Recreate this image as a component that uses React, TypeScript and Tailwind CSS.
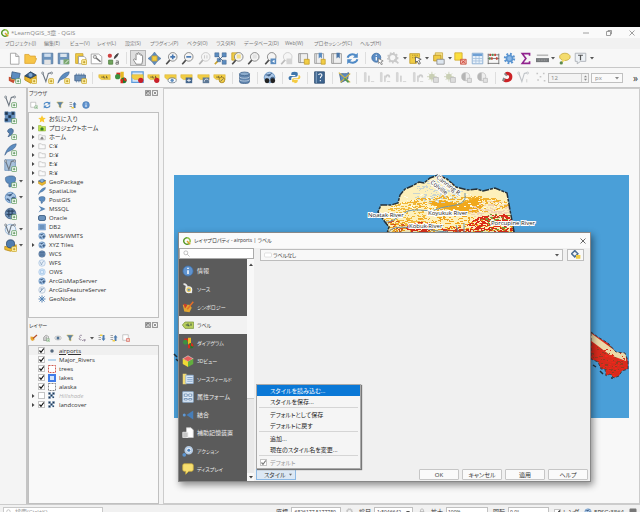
import type { ReactNode } from 'react';
import { clsx } from 'clsx';

const B = '#5b8cc0';
const D = '#3f5f86';
const Y = '#f1cd45';

const plus = (
  <g>
    <rect x="9.5" y="9.5" width="6" height="6" rx="1" fill="#fff" stroke="#5c9a5c" />
    <path d="M12.5 11v3M11 12.5h3" stroke="#4a8a4a" />
  </g>
);
const yellowPlus = (
  <g>
    <rect x="9.5" y="9.5" width="6" height="6" rx="1" fill="#fff3b0" stroke="#cda726" />
    <path d="M12.5 11v3M11 12.5h3" stroke="#b58d10" />
  </g>
);
const lens = (
  <g fill="none">
    <path d="M6 10 1.5 15" stroke="#4d4d4d" strokeWidth="2" />
    <circle cx="9.5" cy="6" r="5.300" fill="#f4f4f4" stroke="#777" />
  </g>
);
const tag = <path d="M1 4.5h11l3 0v6H4L1 8z" fill={Y} stroke="#d5ae2c" strokeWidth=".6" />;
const tagText = <path d="M4 7.5h2M7 6v2.5h2M10.500 6v2.500h1.500" stroke="#5c5330" fill="none" />;
const globe = (
  <g>
    <circle cx="8" cy="8" r="6.500" fill="#a9c6e6" stroke={B} />
    <path d="M3 5c3-1 3 2 5 1s1-4 3-3M3 10c2-1 4 0 4 3M10 8c2-1 4 0 4 1l-3 3c-2-1-2-3-1-4z" fill={D} stroke={D} />
  </g>
);
const vShape = (
  <g fill="none" stroke="#6c7680">
    <path d="M2 2.500 6 13l3-10 4-1" strokeWidth="1.300" />
    <circle cx="2" cy="2.500" r="1.200" fill="#fff" />
    <circle cx="13" cy="2.500" r="1.200" fill="#fff" />
  </g>
);
const feather = <path d="M1 15C3 8 7 2 15 1c0 5-5 8-11 10z" fill={B} stroke={D} strokeWidth=".7" />;
const elephant = <path d="M2 3c2-2 10-3 12 0 1 3-1 7-2 8-2 0-2-1-3-1v4c-1 1-3 1-3 0v-4C3 11 1 6 2 3z" fill={B} stroke={D} strokeWidth=".8" />;
const gearBody = (
  <g>
    <circle cx="8" cy="8" r="5.500" stroke="#5a94d0" strokeWidth="3" strokeDasharray="2.200 2.100" fill="none" />
    <circle cx="8" cy="8" r="3.700" fill="#8bb8e6" stroke="#5a94d0" strokeWidth="2" />
  </g>
);
const bars = (
  <path d="M3 2h2v11H3zM8 6h1v7H8zM11 13h4" fill="#dcdcdc" stroke="#cfcfcf" />
);
const sun = (
  <g>
    <circle cx="6" cy="7" r="3.500" fill="#c9cfb4" />
    <path d="M6 1v12M0 7h12M2 3l8 8M10 3l-8 8" stroke="#c9cfb4" />
    <path d="M8 8h6v6H8z" fill="#dcdcdc" stroke="#bbb" />
  </g>
);
const half = (
  <g>
    <circle cx="7" cy="7" r="5" fill="#eee" stroke="#c4c4c4" />
    <path d="M7 2a5 5 0 0 0 0 10z" fill="#b5b5b5" />
    <path d="M9 9h5v5H9z" fill="#e2e2e2" stroke="#bbb" />
  </g>
);
const folder = <path d="M1.500 3.500h5l1.500 2h6.500v8h-13z" fill="#fafafa" stroke="#a5a5a5" />;
const checker = (
  <path d="M1 1h4v4H1zM9 1h4v4H9zM5 5h4v4H5zM1 9h4v4H1zM9 9h3v3H9z" fill="#22364d" stroke="#5b8cc0" strokeWidth=".6" />
);
const pin = <circle cx="12" cy="11.500" r="3.200" fill="#c8202a" />;

const icons: Record<string, ReactNode> = {
  qgis: (
    <g>
      <path d="M8 1.500a6.500 6.500 0 1 0 4 11.600" fill="none" stroke="#5a9a2b" strokeWidth="3" />
      <path d="M8 1.500a6.500 6.500 0 0 1 5.500 9.500" fill="none" stroke="#8bbf3a" strokeWidth="3" />
      <path d="m8 8 6.500 6.500" stroke="#d9a32a" strokeWidth="3" />
    </g>
  ),
  file: <path d="M3 1.500h6.500l4 4v9.500H3zM9.500 1.500v4h4" fill="#fff" stroke="#999" />,
  open: <path d="M1 3h5l1.500 2H14v3h1.500L13 14H1z" fill="#f7c548" stroke="#dca534" />,
  save: (
    <g>
      <path d="M1.500 1.500h13v13h-13z" fill="#6d94bd" stroke="#54789f" />
      <path d="M4 2h8v4H4z" fill="#cfdeee" />
      <path d="M4 9.500h8V15H4z" fill="#e4e4e4" />
    </g>
  ),
  saveAs: (
    <g>
      <path d="M1.500 1.500h13v13h-13z" fill="#6d94bd" stroke="#54789f" />
      <path d="M4 2h8v4H4zM4 9.500h8V15H4z" fill="#dce5ee" />
      <path d="M8 9h7v6H8z" fill="#7aa76f" />
      <path d="m10 14 4-4" stroke="#fff" />
    </g>
  ),
  layout: (
    <g>
      <path d="M2 2h9v3H5v9H2z" fill={Y} stroke="#caa32d" />
      <path d="M5.500 5.500h7l2 2v7h-9z" fill="#fff" stroke="#999" />
      {yellowPlus}
    </g>
  ),
  layoutManager: (
    <g>
      <path d="M1.500 2.500h9l4 3v9h-13z" fill="#fff" stroke="#999" />
      <path d="m6 6 7 6" stroke="#777" strokeWidth="2" />
      <circle cx="6" cy="6" r="2" fill="#ddd" stroke="#888" />
    </g>
  ),
  style: (
    <g>
      <rect x="1" y="2" width="5" height="5" rx="2" fill="#cf4040" />
      <path d="M9 8c0-3 3-6 5-6-1 2-2 5-5 6z" fill="#444" stroke="#444" />
      <path d="M2 10h5v5H2z" fill="#70a35d" stroke="#4d7f3e" />
      <path d="M11 11h3v4h-3v-2h3" fill="none" stroke="#666" />
    </g>
  ),
  hand: <path d="M5 15c-1-3-4-5-3-6s2 0 3 1V3c0-1.500 2-1.500 2 0V2c0-1.500 2-1.500 2 0v1c0-1 2-1 2 0v1.500c0-1 2-1 2 .5v6l-1 4z" fill="#fff" stroke="#777" />,
  pan: (
    <g>
      <path d="M8 0l3.500 4.500h-7zM8 16l3.500-4.500h-7zM0 8l4.500-3.500v7zM16 8l-4.500-3.500v7z" fill={B} stroke={D} strokeWidth=".5" />
      <path d="M5 5h6v6H5z" fill={Y} stroke="#c9a22d" />
    </g>
  ),
  zoomIn: <g>{lens}<path d="M9.500 3v6M6.500 6h6" stroke="#4576b0" strokeWidth="2" /></g>,
  zoomOut: <g>{lens}<path d="M6.500 6h6" stroke="#4576b0" strokeWidth="2" /></g>,
  zoomNative: <g opacity=".4">{lens}<path d="M8 4v4M11 4v4" stroke="#777" /></g>,
  zoomFull: (
    <g>
      <path d="M5 11 1 15" stroke="#caa32d" strokeWidth="2" />
      <path d="M1 1h5v5H1zM10 1h5v5h-5zM10 10h5v5h-5zM4 8h4v4H4z" fill={B} stroke={D} strokeWidth=".6" />
      <path d="m5 5 6 6M11 5 6 10" stroke={D} />
    </g>
  ),
  zoomSelection: <g><path d="M1 1h8v9H1z" fill={Y} stroke="#c6a02c" />{lens}<path d="M7 3h5v5H7z" fill="#f6e08a" /></g>,
  zoomLayer: <g>{lens}<path d="M7 3h5v5H7z" fill="#e3e3e3" /></g>,
  zoomLast: <g>{lens}<path d="M8 8h7v7H8z" fill={B} /><path d="m13 9.500-3 2 3 2z" fill="#fff" /></g>,
  zoomNext: <g opacity=".35">{lens}<path d="M8 8h7v7H8z" fill="#999" /></g>,
  mapView: <g><path d="M2 2h11v11H2zM4 2v11" fill="#efefef" stroke="#8c8c8c" /><path d="M9 9h6v6H9z" fill={Y} stroke="#c6a02c" /></g>,
  bookmarkNew: <g><path d="M2 2h11v12H2zM4 2v12" fill="#eee" stroke="#999" /><path d="M7 1h4v7L9 6 7 8z" fill={B} /><path d="M10 9h5v6h-5z" fill={Y} stroke="#c6a02c" /></g>,
  bookmark: <g><path d="M2 2h12v12H2zM4 2v12" fill="#eee" stroke="#8c8c8c" /><path d="M8 1h4v7l-2-2-2 2z" fill="#4a76a8" /></g>,
  refresh: (
    <g fill="none" stroke="#4f8ac6" strokeWidth="2.400">
      <path d="M2 7c1-4 7-6 11-2M14 9c-1 4-7 6-11 2" />
      <path d="M14.500 1v6H8.500zM1.500 15V9h6z" fill="#4f8ac6" stroke="none" />
    </g>
  ),
  identify: (
    <g>
      <circle cx="6.500" cy="7" r="5.500" fill="#5a8cc4" stroke="#3f6fa6" />
      <path d="M6.500 6v4.500M6.500 3.500v1.200" stroke="#fff" strokeWidth="1.600" />
      <path d="m9 8 6 3-2.500 1L14 15l-1.500.5-1.500-3L9 14z" fill="#fff" stroke="#666" strokeWidth=".8" />
    </g>
  ),
  gearOff: <g opacity=".35" fill="none" stroke="#777"><circle cx="7" cy="7" r="4.500" strokeWidth="2.500" /><circle cx="7" cy="7" r="6" strokeDasharray="2 2" strokeWidth="2" /><path d="m9 9 5 5" strokeWidth="2" /></g>,
  select: <g><path d="M1 2h12v4l-4 8H1z" fill={Y} stroke="#bf9d30" /><path d="M4 4h7M4 7h5" stroke="#8f7825" strokeDasharray="1 1" /><path d="m8 6 7 3-3 1 2 4-2 1-2-4-2 2z" fill="#fff" stroke="#555" /></g>,
  selectForm: <g><path d="M4 1h9v8H4z" fill="#f8e287" stroke="#c8a840" /><path d="M2 4h9v7H2z" fill={Y} stroke="#b79326" /><path d="M6 9h9v6H6z" fill="#dde6ef" stroke="#888" /></g>,
  deselect: <g><path d="M1 1h9v9H1z" fill="#fbdf3f" stroke="#d2aa2a" /><path d="M8 9h7v6H8z" fill="#f3c0b4" stroke="#c94f40" /><path d="m9 10 5 4M14 10l-5 4" stroke="#c93a30" /></g>,
  table: <g><path d="M1.500 1.500h13v13h-13z" fill="#eaf2fa" stroke="#7fa5cd" /><path d="M2 2h12v3H2z" fill="#6fa0d4" /><path d="M2 8h12M2 11h12M6 5v9M10 5v9" stroke="#a4c0de" /></g>,
  calc: <g><path d="M1.500 2v13M14.500 2v13M1 3.500h14M1 8h14M1 14h14" stroke="#666" /><path d="M4 2v3M10 2v3M6 6.500v3M12 6.500v3" stroke="#c94436" strokeWidth="2" /><path d="M7 2v3M3.500 6.500v3" stroke="#599051" strokeWidth="2" /></g>,
  gear: gearBody,
  sigma: <path d="M13 4.500V2H4l4.500 6L4 14h9v-2.500" fill="none" stroke="#91248f" strokeWidth="2" />,
  ruler: <g><path d="M1 4h14" stroke="#b9b9b9" strokeWidth="2" /><path d="M0 7.500h16v5H0z" fill="#76797c" /><path d="M2 10h12" stroke="#b9b9b9" strokeDasharray="1 1" /></g>,
  tip: <g><ellipse cx="8.500" cy="6" rx="6.500" ry="4.500" fill="#f4dc6d" stroke="#c6aa3d" /><path d="m5 9-1 5 5-4z" fill="#f4dc6d" /><circle cx="4" cy="13.500" r="2" fill="#5d8a4c" /></g>,
  textBox: <g><path d="M1.500 1.500h13v10H8l-4 3v-3H1.500z" fill="#eef2f6" stroke="#a5aab0" /><path d="M5 4h6M8 4v6" stroke="#555" strokeWidth="1.500" /></g>,
  layers: <g><path d="m1 7 8 2-2 6-6-3z" fill="#c64f35" /><path d="m4 5 9 1-1 6-9-2z" fill="#e7b33a" /><path d="m5 1 10 2-2 8-9-2z" fill={B} stroke={D} />{plus}</g>,
  gpkg: <g><path d="m1 6 7 3 7-4v6l-7 4-7-4z" fill="#eab62d" stroke="#b98a18" /><path d="m1 6 7-4 7 3-7 4z" fill="#4f7dae" stroke={D} /><circle cx="8" cy="5" r="3" fill="#8db2da" /></g>,
  gpkgAdd: <g><path d="m1 6 7 3 7-4v6l-7 4-7-4z" fill="#eab62d" stroke="#b98a18" /><path d="m1 6 7-5 7 4-7 4z" fill="#34587f" stroke="#27425f" /><circle cx="8" cy="5" r="2.500" fill="#7ba4d0" />{yellowPlus}</g>,
  vectorAdd: <g>{vShape}{plus}</g>,
  vectorNew: <g>{vShape}{yellowPlus}</g>,
  featherAdd: <g>{feather}{plus}</g>,
  featherNew: <g>{feather}{yellowPlus}</g>,
  memory: <g><path d="M1 5h13v7H1z" fill="#6a8fb8" stroke={D} /><path d="M3 3v11M6 3v11M9 3v11M12 3v11" stroke="#5a7fa8" strokeDasharray="2 7" />{yellowPlus}</g>,
  tag: <g>{tag}{tagText}</g>,
  diagram: <g><path d="M3 2h5v5H3z" fill="#d92b20" /><circle cx="4.500" cy="7" r="3.200" fill="#3c9140" /><path d="M8 1h4v6H8zM8 6h4v6H8z" fill="#e8b923" /><circle cx="12" cy="11.500" r="3.500" fill="#1f7a31" /><path d="M12 11.500V8a3.500 3.500 0 0 1 3 5zM8 10h3v5H8z" fill="#d92b20" /></g>,
  tagFrame: <g><path d="M1 1h14v13H1z" fill="#d5e7fa" stroke="#5c9bdc" strokeWidth="1.500" />{tag}{pin}</g>,
  tagPin: <g>{tag}{tagText}{pin}</g>,
  tagEye: <g>{tag}<ellipse cx="10" cy="11.500" rx="5" ry="3" fill="#fff" stroke="#678" /><circle cx="10" cy="11.500" r="2" fill={B} /></g>,
  tagMove: <g>{tag}<path d="M7 8h8v7H7z" fill="#46678e" /><path d="M8.500 11.500h5M11 9.500v4" stroke="#fff" /></g>,
  tagRotate: <g>{tag}<path d="M7 8h8v7H7z" fill="#5d7896" /><path d="M9 13c0-3 3-4 5-2" stroke="#fff" fill="none" /></g>,
  tagEdit: <g>{tag}{tagText}<circle cx="11" cy="11" r="3.500" fill={Y} stroke="#a98622" /><path d="m9 13 4-4" stroke="#666" /></g>,
  db: <g fill="#6185ae" stroke="#45678f"><path d="M2 3.500v10c0 2.500 12 2.500 12 0v-10" /><ellipse cx="8" cy="3.500" rx="6" ry="2.200" fill="#8caccd" /><path d="M2 7c0 2.500 12 2.500 12 0M2 10.500c0 2.500 12 2.500 12 0" fill="none" stroke="#c6d6e6" /></g>,
  metasearch: <g>{globe}<circle cx="5" cy="12" r="3" fill="#222" /><circle cx="12" cy="12" r="3" fill="#222" /></g>,
  python: <g><path d="M8 1c-3 0-4 1-4 3v1h5v1H3C0 6 0 11 3 11h1V9c0-1 1-2 2-2h4c1 0 2-1 2-2V3c0-1-1-2-4-2z" fill="#3e76ac" /><path d="M8 15c3 0 4-1 4-3v-1H7v-1h6c3 0 3-5 0-5v2c0 1-1 2-2 2H7c-1 0-2 1-2 2v2c0 1 1 1 3 1z" fill="#f5cb42" /></g>,
  help: <g><path d="M2 1h12v14H2z" fill="#3e6590" stroke="#29496c" /><path d="M4 1v14" stroke="#9db7d2" /><path d="M7 5c0-2 4-2 4 0s-2 1.500-2 4M9 11v1.500" fill="none" stroke="#fff" strokeWidth="1.300" /></g>,
  topology: <g><path d="M2 4c4-2 7 1 11-2l-1 8-8 4z" fill="#5e8dbf" stroke={D} /><path d="m1 2 14 12M3 14 15 3" stroke="#d2b441" strokeWidth="1.500" /><path d="m8 9 5 5" stroke="#4c9550" strokeWidth="2" /></g>,
  bars,
  barsTurn: <g>{bars}<path d="M10 8c0-4 4-4 4 0" stroke="#ccc" strokeWidth="2" fill="none" /></g>,
  sun,
  half,
  magnet: <g fill="none" strokeWidth="4"><path d="M4 11c4 2 8 0 8-4S8 2 6 4" stroke="#cc2226" /><path d="m2 10 2.500 1M5 5l1.500-1.500" stroke="#888" /></g>,
  vOff: <g opacity=".4">{vShape}<path d="M12 10v4" stroke="#888" /></g>,
  dotsOff: <path d="M3 3h2M11 3h2M7 7h2M4 11h2M12 12h2" stroke="#c5c5c5" strokeWidth="2" />,
  raster: <g><path d="M1 1h13v13H1z" fill="#6b93bf" />{checker}{plus}</g>,
  comma: <g><path d="M8 2c4-1 6 6-3 10 2-3 2-4 1-5-3-1-1-5 2-5z" fill="#5480b0" stroke={D} />{plus}</g>,
  vBlock: <g><path d="M1 1h13v13H1z" fill="#a8c1db" stroke="#6f94bb" />{vShape}{plus}</g>,
  postgisAdd: <g>{elephant}{plus}</g>,
  postgis: elephant,
  globeAdd: <g>{globe}{plus}</g>,
  wcsAdd: <g><circle cx="8" cy="8" r="6.500" fill="#6d8fb4" stroke={D} /><path d="M3 5h10M3 9h10M6 3v9M10 3v9" stroke="#2c4563" strokeWidth="1.500" />{plus}</g>,
  wfsAdd: <g><circle cx="8" cy="8" r="6.500" fill="#e6eff8" stroke="#8aacd0" />{vShape}{plus}</g>,
  boxAdd: <g><path d="m1 9 7 2 7-4v5l-7 3-7-2z" fill="#efbd33" stroke="#b98a18" /><circle cx="8" cy="6" r="5" fill="#4f7db0" stroke="#2d4a6c" />{yellowPlus}</g>,
  addLayer: <g><path d="M1.500 2.500h10v10h-10z" fill="#fff" stroke="#999" />{plus}</g>,
  filter: <path d="M1.500 2h13L10 8v6l-4-2V8z" fill="#5480b0" stroke="#e2bf4a" />,
  collapse: <g><path d="M1 3h5M1 7h5M1 11h5" stroke="#888" strokeWidth="1.500" /><path d="M9 14V7H7l4-5 4 5h-2v7z" fill="#4f7db0" /><path d="M5 12h5v3H5z" fill={Y} /></g>,
  expand: <g><path d="M1 3h5M1 7h5M1 11h5" stroke="#888" strokeWidth="1.500" /><path d="M9 2v7H7l4 5 4-5h-2V2z" fill="#4f7db0" /><path d="M4 1h5v3H4z" fill={Y} /></g>,
  info: <g><circle cx="8" cy="8" r="6.800" fill="#5f93cf" stroke="#3f6ea6" /><path d="M8 7v5M8 3.500v1.700" stroke="#fff" strokeWidth="2" /></g>,
  star: <path d="m8 .5 2.300 5 5.200.6-3.900 3.600 1.100 5.300L8 12.300 3.300 15l1.100-5.300L.5 6.100l5.200-.6z" fill="#fbc92f" />,
  projectHome: <g><path d="M1 3h5l1.500 2H15v9H1z" fill="#bfe14d" stroke="#84aa2b" /><path d="M5 9 8 6l3 3v4H5z" fill="#397c2d" /></g>,
  home: <g>{folder}<path d="m5 10 3-3 3 3v3H5z" fill="#888" /></g>,
  folder,
  feather,
  mssql: <path d="M1 1c4 3 10 4 14 7-4 2-9 3-14 7 2-4 4-5 5-7C5 6 3 4 1 1z" fill="#5c88b7" />,
  oracle: <rect x="1" y="3" width="14" height="10" rx="3" fill="#6b93bd" stroke="#294d75" strokeWidth="1.500" />,
  db2: <g><path d="M1 2h14v12H1z" fill="#8bb0da" stroke="#6b93c4" /><path d="M3 6h10M3 10h10" stroke="#3c638d" strokeWidth="1.500" /></g>,
  globe,
  wcs: <g><circle cx="8" cy="8" r="6.500" fill="#7799bf" stroke={D} /><path d="M3 5.500h10M3 10h10M6 3v10M10 3v10" stroke="#33517a" /></g>,
  wfs: <g><circle cx="8" cy="8" r="6.500" fill="#eaf1f9" stroke="#8fb1d6" /><path d="m4 5 3 7 2-6 3-1" stroke="#6789ad" fill="none" /></g>,
  ows: <g><circle cx="8" cy="8" r="6.500" fill="#dcebfa" stroke="#8bb4df" /><path d="M5 5h6v6H5z" fill="none" stroke="#8bb4df" /></g>,
  arcFeature: <g><circle cx="8" cy="8" r="6.500" fill="#eef3f8" stroke="#8fa7c2" /><path d="m4 12 7-8M5 6h3" stroke="#456a94" strokeWidth="1.500" /></g>,
  geonode: <path d="M8 1v14M1 8h14M3 3l10 10M13 3 3 13" stroke="#5483b5" strokeWidth="2" />,
  brush: <g><path d="m1 5 7 1 1 6-5 2-3-4z" fill="#e8a52c" /><path d="m6 9 8-7" stroke="#b7512c" strokeWidth="2.500" /></g>,
  group: <g><path d="M3 7 8 2l5 3v8H3z" fill="#e7e7e7" stroke="#777" /><path d="M6 5v8M9 5v8" stroke="#777" />{plus}</g>,
  eye: <g><ellipse cx="8" cy="8" rx="6.500" ry="4" fill="#eee" stroke="#999" /><circle cx="8" cy="8" r="3" fill="#4d7194" /></g>,
  expr: <path d="M8 3C4 1 1 5 5 7 0 8 3 14 7 11M9 12v2M12 10v4h2v-4" stroke="#75657f" fill="none" strokeWidth="1.300" />,
  remove: <g><path d="M1.500 1.500h11v11h-11z" fill="#fff" stroke="#999" /><path d="M9 9h6v6H9z" fill="#f5c5be" stroke="#cc4c3f" /></g>,
  point: <circle cx="8" cy="8" r="3.500" fill="#55697e" />,
  line: <path d="M0 8h16" stroke="#7db4e0" strokeWidth="2" />,
  trees: <path d="M1 1h14v14H1z" fill="#fff" stroke="#c9463a" strokeWidth="1.800" strokeDasharray="4 2" />,
  lakes: <g><path d="M0 0h16v16H0z" fill="#3f7be8" /><path d="M4 4h8v8H4z" fill="#d3e5fb" /></g>,
  alaska: <path d="M1 1h14v14H1z" fill="#fff" stroke="#444" strokeWidth="1.300" strokeDasharray="4 2" />,
  checker,
  search: <g fill="none" stroke="#777"><circle cx="6.500" cy="6.500" r="4.500" /><path d="m10 10 5 5" /></g>,
  blank: <rect x="1" y="4" width="14" height="8" rx="2" fill="#fff" stroke="#c7c7c7" />,
  auto: <g><path d="m6 1 5 5-5 5-5-5z" fill="none" stroke="#4e6f93" strokeWidth="2.400" /><path d="M8 8h7v6H8z" fill={Y} /></g>,
  source: <g fill="none"><path d="M2 2c2-1 5 1 4 4l7 7" stroke="#e6e6e6" strokeWidth="2.600" /><circle cx="9" cy="9" r="4" fill="#e8c95b" stroke="#f2f2f2" strokeWidth="1.500" /><circle cx="9" cy="9" r="1.500" fill="#5d8bbd" /></g>,
  symbology: <g><path d="M1 5h9l3 4-3 6-7-1z" fill="#e2a630" /><path d="M2 4c2-1 4 0 5 2l-3 4z" fill="#c8402b" /><path d="m7 11 8-10" stroke="#e46d28" strokeWidth="2" /></g>,
  label: <g><path d="M4 4h11.500v8.500H4L.5 8z" fill="#b9cf5b" stroke="#7a9440" /><path d="M5 8h2M8 6v3h2M12 6v3" stroke="#3e5648" fill="none" strokeWidth="1.400" /></g>,
  cube: <g><path d="m8 1 7 4-7 4-7-4z" fill="#e5605a" stroke="#fff" strokeWidth=".6" /><path d="m1 5 7 4v7l-7-4z" fill="#f0da35" /><path d="m15 5-7 4v7l7-4z" fill="#62ae3e" /></g>,
  fields: <g><path d="M1 1h5v14H1z" fill="#f2da74" /><path d="M5 3h10v11H5z" fill="#dbe7f4" stroke="#8fb0d5" /><path d="M7 6h7M7 8.500h7M7 11h7" stroke="#6b94c4" /></g>,
  form: <g><path d="M1 1h14v14H1z" fill="#dfeaf6" stroke="#8badd4" /><path d="M3 4h4v3H3zM9 4h4v3H9zM3 10h4v2H3zM9 10h4v2H9z" fill="#fff" stroke="#567ca8" /></g>,
  join: <g><path d="M15 2v12L6 8z" fill="#467db8" /><circle cx="3" cy="8" r="2" fill="#5f98d4" /></g>,
  storage: <g><path d="M6 1h6l3 3v10H6z" fill="#fff" stroke="#ccc" /><path d="M1 7h7v7H1z" fill="#c7c7c7" stroke="#eee" /></g>,
  action: <g><circle cx="9" cy="7" r="4.500" fill="#e8eef5" stroke="#b5cbe3" strokeWidth="2.500" /><circle cx="9" cy="7" r="2" fill="#4b80bb" /><circle cx="3" cy="13" r="2.500" fill="#5c94cf" /></g>,
  display: <path d="M1 3c0-1 1-2 2-2h10c1 0 2 1 2 2v6c0 1-1 2-2 2H9l-4 4v-4H3c-1 0-2-1-2-2z" fill="#f7df70" stroke="#d0b23c" />,
  message: <path d="M1 3c0-1 1-2 2-2h10c1 0 2 1 2 2v6c0 1-1 2-2 2H9l-4 4v-4H3c-1 0-2-1-2-2z" fill="#777" />,
  lock: <g fill="#eee" stroke="#999"><path d="M5 7V4c0-3 6-3 6 0v3" /><path d="M4 7h8v7H4z" /></g>,
};

const Icon = ({ name, className = 'size-[13px]' }: { name: string; className?: string }) => (
  <svg viewBox="0 0 16 16" className={clsx('shrink-0', className)} aria-hidden="true">
    {icons[name]}
  </svg>
);

const Caret = ({ className = 'size-1 fill-[#555]' }: { className?: string }) => (
  <svg viewBox="0 0 8 8" className={clsx('pointer-events-none shrink-0', className)} aria-hidden="true">
    <path d="M0 2h8L4 7z" />
  </svg>
);

// '|' is a drop-down arrow next to the icon before it
const ToolGroup = ({ items, className }: { items: string; className: string }) => (
  <div className={clsx('flex shrink-0 items-center justify-between', className)}>
    {items.split(' ').map((name, i) =>
      name === '|' ? (
        <button key={i} aria-label="メニュー" className="flex w-[6px] justify-center">
          <Caret />
        </button>
      ) : (
        <button
          key={i}
          aria-label={name}
          className={clsx(
            'flex size-4 items-center justify-center',
            name === 'hand' && 'border border-[#b5b5b5] bg-[#dedede]'
          )}
        >
          <Icon name={name} />
        </button>
      )
    )}
  </div>
);

const Grip = () => <div className="mr-[3px] ml-1 h-3 w-px shrink-0 bg-[#dedede]" />;

const Check = ({ label, checked, faded }: { label: string; checked: boolean; faded?: boolean }) => (
  <span className="grid size-[7px] shrink-0">
    <input
      type="checkbox"
      aria-label={label}
      defaultChecked={checked}
      className="peer col-start-1 row-start-1 size-[7px] appearance-none border border-[#c4c4c4] bg-white"
    />
    <svg
      viewBox="0 0 7 7"
      className={clsx('pointer-events-none invisible col-start-1 row-start-1 fill-none peer-checked:visible', faded ? 'stroke-[#777]' : 'stroke-[#111]')}
    >
      <path d="M1.500 3.500 3 5.300 5.800 1.500" strokeWidth="1.200" />
    </svg>
  </span>
);

const menus = [
  ['プロジェクト(J)', 'w-[39px]'],
  ['編集(E)', 'w-[26px]'],
  ['ビュー(V)', 'w-[27px]'],
  ['レイヤ(L)', 'w-[28px]'],
  ['設定(S)', 'w-[25px]'],
  ['プラグイン(P)', 'w-[37px]'],
  ['ベクタ(O)', 'w-[29px]'],
  ['ラスタ(R)', 'w-[28px]'],
  ['データベース(D)', 'w-[41px]'],
  ['Web(W)', 'w-[29px]'],
  ['プロセッシング(C)', 'w-[46px]'],
  ['ヘルプ(H)', 'w-[30px]'],
];

const leftBar = ['vectorAdd', 'raster', 'comma', 'featherAdd', 'vBlock', 'postgisAdd |', 'globeAdd |', 'wcsAdd', 'wfsAdd |', 'boxAdd |'];

const browser: [string, string, boolean][] = [
  ['star', 'お気に入り', false],
  ['projectHome', 'プロジェクトホーム', true],
  ['home', 'ホーム', true],
  ['folder', 'C:¥', true],
  ['folder', 'D:¥', true],
  ['folder', 'E:¥', true],
  ['folder', 'R:¥', true],
  ['gpkg', 'GeoPackage', true],
  ['feather', 'SpatiaLite', false],
  ['postgis', 'PostGIS', false],
  ['mssql', 'MSSQL', false],
  ['oracle', 'Oracle', false],
  ['db2', 'DB2', false],
  ['globe', 'WMS/WMTS', false],
  ['globe', 'XYZ Tiles', true],
  ['wcs', 'WCS', false],
  ['wfs', 'WFS', false],
  ['ows', 'OWS', false],
  ['globe', 'ArcGisMapServer', false],
  ['arcFeature', 'ArcGisFeatureServer', false],
  ['geonode', 'GeoNode', false],
];

const layers: [string, string, boolean, boolean][] = [
  ['point', 'airports', true, false],
  ['line', 'Major_Rivers', true, false],
  ['trees', 'trees', true, false],
  ['lakes', 'lakes', true, false],
  ['alaska', 'alaska', true, false],
  ['checker', 'Hillshade', false, true],
  ['checker', 'landcover', true, true],
];

const pages = [
  ['info', '情報'],
  ['source', 'ソース'],
  ['symbology', 'シンボロジー'],
  ['label', 'ラベル'],
  ['diagram', 'ダイアグラム'],
  ['cube', '3Dビュー'],
  ['fields', 'ソースフィールド'],
  ['form', '属性フォーム'],
  ['join', '結合'],
  ['storage', '補助記憶装置'],
  ['action', 'アクション'],
  ['display', 'ディスプレイ'],
];

const DockTitle = ({ children }: { children: string }) => (
  <div className="flex h-[10px] items-center gap-px px-px">
    <h2 className="flex-1 text-[5px]">{children}</h2>
    {['M2 4V2h3M2 2h3v3H2z', 'M2 2l3 3M5 2 2 5'].map((d) => (
      <button key={d} aria-label="パネル">
        <svg viewBox="0 0 7 7" className="size-[6px] fill-none stroke-[#666]">
          <path d={'M.5.5h6v6h-6z' + d} strokeWidth=".8" />
        </svg>
      </button>
    ))}
  </div>
);

const Arrow = ({ shown }: { shown: boolean }) => (
  <svg viewBox="0 0 4 4" className={clsx('size-1 shrink-0 fill-[#444]', !shown && 'invisible')}>
    <path d="m1 0 2.500 2L1 4z" />
  </svg>
);

const Docks = () => (
  <aside className="flex w-[135px] shrink-0 flex-col border-l-2 border-[#c4c4c4] pr-[2px] text-[6px]">
    <section>
      <DockTitle>ブラウザ</DockTitle>
      <div className="flex h-[14px] items-center gap-[5px] px-[2px]">
        {['addLayer', 'refresh', 'filter', 'collapse', 'info'].map((name) => (
          <button key={name} aria-label={name}>
            <Icon name={name} className="size-2" />
          </button>
        ))}
      </div>
      <ul className="h-[206px] border border-[#c0c0c0] bg-[#f9f9f9] pt-px">
        {browser.map(([icon, label, open]) => (
          <li key={label} className="flex h-[9px] items-center gap-[3px] pl-[2px]">
            <Arrow shown={open} />
            <Icon name={icon} className="size-2" />
            <span>{label}</span>
          </li>
        ))}
      </ul>
    </section>
    <section className="flex min-h-0 flex-1 flex-col pt-[2px]">
      <DockTitle>レイヤー</DockTitle>
      <div className="flex h-[15px] items-center gap-1 px-[2px]">
        {['brush', 'group', 'eye', 'filter', 'expr', '|', 'expand', 'collapse', 'remove'].map((name) => (
          <button key={name} aria-label={name}>
            {name === '|' ? <Caret /> : <Icon name={name} className="size-2" />}
          </button>
        ))}
      </div>
      <ul className="flex-1 border border-[#c0c0c0] bg-[#f9f9f9]">
        {layers.map(([icon, label, checked, open], i) => (
          <li key={label} className={clsx('flex h-[9px] items-center gap-[3px] pl-[2px]', i === 0 && 'bg-[#f0f0f0]')}>
            <Arrow shown={open} />
            <Check label={label} checked={checked} />
            <Icon name={icon} className="size-2" />
            <span className={clsx(i === 0 && 'underline', checked ? 'font-medium' : 'text-[#b5b5b5] italic')}>{label}</span>
          </li>
        ))}
      </ul>
    </section>
  </aside>
);

const specks = (seed: number, n: number, cx: number, cy: number, rx: number, ry: number) => {
  let s = seed;
  const rnd = () => {
    s = (s * 16807) % 2147483647;
    return s / 2147483647;
  };
  let d = '';
  for (let i = 0; i < n; i++) {
    const a = rnd() * Math.PI * 2;
    const r = Math.sqrt(rnd());
    const w = 1 + Math.round(rnd() * 2);
    d += `M${Math.round(cx + Math.cos(a) * r * rx)} ${Math.round(cy + Math.sin(a) * r * ry)}h${w}v1h-${w}z`;
  }
  return d;
};

const north =
  'M212 62 215 52 211 47 204 37 207 30 217 30 224 28 226 20 231 14 238 11 245 7 250 8 256 3 264 0 273 4 282 12 294 15 303 14 309 16 321 13 333 18 336 35 341 62z';
const south = 'M417 157 424 162 434 168 442 177 451 178 454 186 454 194 448 196 445 201 440 203 436 199 432 201 431 194 427 194 424 187 417 184z';

const MapView = () => (
  <svg viewBox="0 0 455 243" className="w-full overflow-visible bg-[#4a9fd8]" role="img" aria-label="地図">
    <defs>
      <clipPath id="north"><path d={north} /></clipPath>
      <clipPath id="south"><path d={south} /></clipPath>
    </defs>
    <g clipPath="url(#north)">
      <path d="M200 0h145v65H200z" fill="#fdf0bb" />
      <path d={specks(7, 420, 282, 29, 52, 9)} fill="#f0b02c" />
      <path d="M254 28c10-6 22 0 34 0 8-2 13-8 20-4 2 10-6 16-18 14-8-4-22-2-36-10z" fill="#f0a81c" />
      <path d={specks(11, 420, 275, 53, 65, 12)} fill="#efa41d" />
      <path d={specks(13, 220, 230, 44, 20, 18)} fill="#f0b93a" />
      <path d={specks(17, 160, 262, 16, 24, 12)} fill="#c8d4d0" />
      <path d={specks(19, 160, 315, 35, 20, 10)} fill="#f0d2b4" />
      <path d={specks(5, 80, 275, 28, 65, 10)} fill="#fffbe3" />
      <path d={specks(23, 620, 322, 57, 32, 18)} fill="#dc2c1a" />
      <path d={specks(29, 120, 245, 52, 14, 5)} fill="#d9301c" />
      <path d={specks(31, 80, 278, 57, 14, 6)} fill="#dc3a1c" />
      <path d={specks(37, 60, 322, 50, 20, 12)} fill="#7c9a34" />
      <path d={specks(41, 40, 218, 53, 12, 8)} fill="#d4561f" />
      <path d="M206 46c12 4 16-4 28-10 12-3 20 2 30-2 8-4 24-2 27-10v-6M214 60c2-12 20-6 30-8 14 2 20 6 30 4M290 48v14M282 50l4 12" fill="none" stroke="#6f96ad" />
    </g>
    <path d={north} fill="none" stroke="#26323a" strokeWidth="1.500" strokeDasharray="7 1 3 1" />
    <g clipPath="url(#south)">
      <path d={south} fill="#d92a1c" />
      <path d={specks(43, 110, 430, 184, 20, 16)} fill="#963c22" />
      <path d={specks(47, 60, 432, 190, 20, 12)} fill="#f0261a" />
      <path d="m414 156 26 19 12 3v8l-16-6-20-15z" fill="#ecd9a8" />
      <path d={specks(53, 30, 440, 180, 14, 8)} fill="#d9301c" />
    </g>
    <path d={south} fill="none" stroke="#374049" strokeDasharray="3 2" />
    <path d="M0 179l3 3M2 184l2 2M419 190l3 2M437 203h2M426 196l3 3" stroke="#22303a" strokeWidth="1.500" />
    <g className="fill-[#222] stroke-white stroke-2 text-[6px] font-medium [paint-order:stroke]">
      <text x="194" y="42">Noatak River</text>
      <text x="254" y="40">Koyukuk River</text>
      <text x="235" y="53">Kobuk River</text>
      <text x="317" y="50">Porcupine River</text>
      <text x="262" y="3" transform="rotate(38 262 3)">Canning R.</text>
      <text x="256" y="8" transform="rotate(38 256 8)">Colville</text>
    </g>
  </svg>
);

const MenuItem = ({ children, active }: { children: string; active?: boolean }) => (
  <li>
    <button role="menuitem" className={clsx('h-[11px] w-full pl-[13px] text-left', active ? 'bg-[#0a78d6] text-white' : 'text-[#222]')}>
      {children}
    </button>
  </li>
);

const Rule = () => <li className="mx-[2px] mb-px border-t border-[#d5d5d5]" />;

const StyleMenu = () => (
  <ul role="menu" className="absolute bottom-full left-0 w-[105px] border border-[#aaa] bg-[#f5f5f5] text-[6px] shadow-[1px_1px_1px_#777]">
    <MenuItem active>スタイルを読み込む...</MenuItem>
    <MenuItem>スタイルを保存...</MenuItem>
    <Rule />
    <MenuItem>デフォルトとして保存</MenuItem>
    <MenuItem>デフォルトに戻す</MenuItem>
    <Rule />
    <MenuItem>追加...</MenuItem>
    <MenuItem>現在のスタイル名を変更...</MenuItem>
    <Rule />
    <li className="flex h-[11px] items-center gap-[3px] pl-[3px] text-[#999]">
      <Check label="デフォルト" checked faded />
      デフォルト
    </li>
  </ul>
);

const Dialog = () => (
  <div
    role="dialog"
    aria-label="レイヤプロパティ"
    className="absolute top-[232px] left-[178px] flex w-[413px] flex-col border border-[#888] bg-[#f0f0f0] shadow-[2px_3px_7px_rgba(0,0,0,0.45)]"
  >
    <header className="flex h-[15px] items-center gap-[3px] bg-[#fafafa] px-1 text-[5px]">
      <Icon name="qgis" className="size-2" />
      <h1 className="flex-1">レイヤプロパティ - airports | ラベル</h1>
      <button aria-label="閉じる">
        <svg viewBox="0 0 6 6" className="size-[6px] stroke-[#444]">
          <path d="m.5.5 5 5m0-5-5 5" strokeWidth=".8" />
        </svg>
      </button>
    </header>
    <div className="flex">
      <div className="flex w-[75px] shrink-0 flex-col">
        <label className="flex h-[11px] items-center gap-[2px] border border-[#aaa] bg-white px-[3px]">
          <Icon name="search" className="size-[7px]" />
          <input aria-label="検索" className="w-full min-w-0 text-[5px] outline-none" />
        </label>
        <div className="flex">
          <nav className="flex-1 bg-[#5b5b5b] pt-[3px] pb-[3px]">
            {pages.map(([icon, label]) => (
              <a
                key={label}
                href="#"
                className={clsx(
                  'flex h-[18px] items-center gap-[3px] pl-[3px]',
                  label === 'ラベル' ? 'bg-[#f2f2f2] text-[#333]' : 'text-[#ececec]',
                  /[一-龠]/.test(label) ? 'text-[6px]' : 'text-[5px]'
                )}
              >
                <Icon name={icon} className="size-3" />
                {label}
              </a>
            ))}
          </nav>
          <div className="flex w-[7px] flex-col items-center bg-[#f8f8f8] pt-1">
            <Caret className="size-1 rotate-180 fill-[#444]" />
            <div className="mt-[131px] w-full flex-1 border-t border-[#ccc] bg-[#e9e9e9]" />
            <Caret className="my-[2px] size-1 fill-[#444]" />
          </div>
        </div>
      </div>
      <div className="flex min-w-0 flex-1 flex-col text-[6px]">
        <div className="flex gap-1 py-px pr-[6px] pl-[6px]">
          <div className="flex h-[12px] flex-1 items-center border border-[#bdbdbd] bg-[#f8f8f8] px-[3px]">
            <Icon name="blank" className="size-2" />
            <select aria-label="ラベル" className="min-w-0 flex-1 appearance-none pl-px text-[5px] outline-none">
              <option>ラベルなし</option>
            </select>
            <Caret />
          </div>
          <button aria-label="自動配置設定" className="flex h-[12px] w-[17px] items-center justify-center border border-[#bdbdbd] bg-[#f8f8f8]">
            <Icon name="auto" className="size-[10px]" />
          </button>
        </div>
        <div className="mt-auto flex gap-[3px] pr-[2px] pb-px pl-[2px]">
          <div className="relative mr-auto">
            <button className="flex h-[11px] w-[40px] items-center justify-between border border-[#8db9e4] bg-[#dce8f4] px-[7px] pr-[3px]">
              スタイル
              <Caret className="size-[3px] fill-[#666]" />
            </button>
            <StyleMenu />
          </div>
          {['OK', 'キャンセル', '適用', 'ヘルプ'].map((label) => (
            <button key={label} className="h-[11px] w-[40px] rounded-[1px] border border-[#c6c6c6] bg-[#fafafa]">
              {label}
            </button>
          ))}
        </div>
      </div>
    </div>
  </div>
);

const StatusField = ({ label, value, className }: { label: string; value: string; className: string }) => (
  <label className="flex items-center gap-[3px]">
    {label}
    <input defaultValue={value} className={clsx('h-[11px] border border-[#c0c0c0] bg-white px-px text-[5px]', className)} />
  </label>
);

const StatusBar = () => (
  <footer className="-mb-[7px] flex h-[15px] shrink-0 items-center gap-[5px] border-t border-[#ccc] bg-[#f1f1f1] px-[3px] text-[6px]">
    <label className="mr-auto flex h-[11px] w-[100px] items-center gap-[3px] border border-[#c8c8c8] bg-white px-[2px]">
      <Icon name="search" className="size-[6px]" />
      <input aria-label="検索" placeholder="検索(Ctrl+K)" className="w-full min-w-0 placeholder:text-[#999]" />
    </label>
    <StatusField label="座標" value="-6826177,5177780" className="w-[50px]" />
    <Icon name="gearOff" className="size-2" />
    <label className="flex items-center gap-[3px]">
      縮尺
      <span className="flex h-[11px] w-[39px] items-center border border-[#c0c0c0] bg-white px-[2px]">
        <select className="w-full min-w-0 appearance-none text-[5px]">
          <option>1:5046642</option>
        </select>
        <Caret />
      </span>
    </label>
    <Icon name="lock" className="size-2" />
    <StatusField label="拡大" value="100%" className="w-[42px]" />
    <StatusField label="回転" value="0.0°" className="w-[41px]" />
    <label className="flex items-center gap-[2px]">
      <Check label="レンダ" checked />
      レンダ
    </label>
    <button className="flex items-center gap-[2px]">
      <Icon name="globe" className="size-2" />
      EPSG:3864
    </button>
    <button aria-label="メッセージ">
      <Icon name="message" className="size-2" />
    </button>
  </footer>
);

const App = () => {
  return (
    <div className="relative flex h-screen flex-col overflow-hidden bg-[#f4f4f4] font-['Open_Sans','Noto_Sans_CJK_JP',sans-serif] leading-none whitespace-nowrap text-[#333] [font-feature-settings:'palt']">
      <div className="h-[27px] shrink-0 bg-black" />
      <header className="flex h-[11px] shrink-0 items-center gap-[2px] bg-[#fafafa] px-px text-[6px] text-[#888]">
        <Icon name="qgis" className="size-2" />
        <span className="flex-1">*LearnQGIS_3章 - QGIS</span>
        <div className="flex items-center gap-[17px] pr-1">
          {['M0 3h6', 'M.5 1.500h4v4h-4zM2 1.500v-1h3.500v3.500h-1', 'm.5.5 5 5m0-5-5 5'].map((d) => (
            <button key={d} aria-label="ウィンドウ">
              <svg viewBox="0 0 6 6" className="size-[6px] fill-none stroke-[#888]">
                <path d={d} strokeWidth=".8" />
              </svg>
            </button>
          ))}
        </div>
      </header>
      <nav className="flex h-[11px] shrink-0 items-center bg-[#f1f1f1] pl-[5px] text-[5px] text-[#777]">
        {menus.map(([label, width]) => (
          <button key={label} className={clsx('shrink-0 text-left', width)}>
            {label}
          </button>
        ))}
      </nav>
      <div className="flex h-[19px] shrink-0 items-center border-b border-[#c8c8c8] bg-[#f7f7f7] pl-[6px]">
        <ToolGroup items="file open save saveAs layout layoutManager style" className="mr-px w-[115px]" />
        <Grip />
        <ToolGroup
          items="hand pan zoomIn zoomOut zoomNative zoomFull zoomSelection zoomLayer zoomLast zoomNext mapView bookmarkNew bookmark refresh"
          className="w-[231px]"
        />
        <Grip />
        <ToolGroup items="identify gearOff | select | selectForm | deselect table calc gear sigma ruler | tip textBox |" className="w-[226px]" />
      </div>
      <div className="flex h-5 shrink-0 items-center border-b border-[#c8c8c8] bg-[#f7f7f7] pl-[6px]">
        <ToolGroup items="layers gpkgAdd vectorNew featherNew memory" className="w-[82px]" />
        <Grip />
        <ToolGroup items="tag diagram tagFrame tagPin tagEye tagMove tagRotate tagEdit" className="w-[132px]" />
        <Grip />
        <ToolGroup items="db" className="w-[17px]" />
        <Grip />
        <ToolGroup items="metasearch" className="w-[17px]" />
        <Grip />
        <ToolGroup items="python" className="w-[17px]" />
        <Grip />
        <ToolGroup items="help" className="w-[17px]" />
        <Grip />
        <ToolGroup items="topology" className="w-4" />
        <Grip />
        <ToolGroup items="bars barsTurn bars barsTurn sun sun half half" className="w-[131px]" />
        <Grip />
        <ToolGroup items="magnet vOff dotsOff" className="w-[49px]" />
        <span className="flex h-[10px] w-[41px] items-center border border-[#c0c0c0] bg-[#f3f3f3] pl-[2px] text-[6px]">
          <input aria-label="許容値" defaultValue="12" className="w-full min-w-0 text-[#888]" />
          <span className="flex h-full w-2 flex-col items-center justify-center border-l border-[#ccc]">
            <Caret className="size-[3px] rotate-180 fill-[#888]" />
            <Caret className="size-[3px] fill-[#888]" />
          </span>
        </span>
        <span className="ml-[2px] flex h-[10px] w-[32px] items-center border border-[#c0c0c0] bg-[#fafafa] px-[3px] text-[6px] text-[#888]">
          <select aria-label="単位" className="w-full min-w-0 appearance-none">
            <option>px</option>
          </select>
          <Caret className="size-1 fill-[#888]" />
        </span>
        <button className="ml-auto pr-[2px] text-[10px] text-[#333]">»</button>
      </div>
      <div className="flex min-h-0 flex-1">
        <div className="flex w-[26px] shrink-0 flex-col pt-[5px] pl-1">
          {leftBar.map((entry) => {
            const [name, drop] = entry.split(' ');
            return (
              <button key={name} aria-label={name} className="flex h-4 items-center gap-[2px]">
                <Icon name={name} />
                {drop && <Caret />}
              </button>
            );
          })}
        </div>
        <Docks />
        <main className="ml-[2px] min-w-0 flex-1 border border-[#ccc] bg-[#f8f8f8] px-[10px] pt-[86px]">
          <MapView />
        </main>
      </div>
      <StatusBar />
      <Dialog />
    </div>
  );
};

export default App;
